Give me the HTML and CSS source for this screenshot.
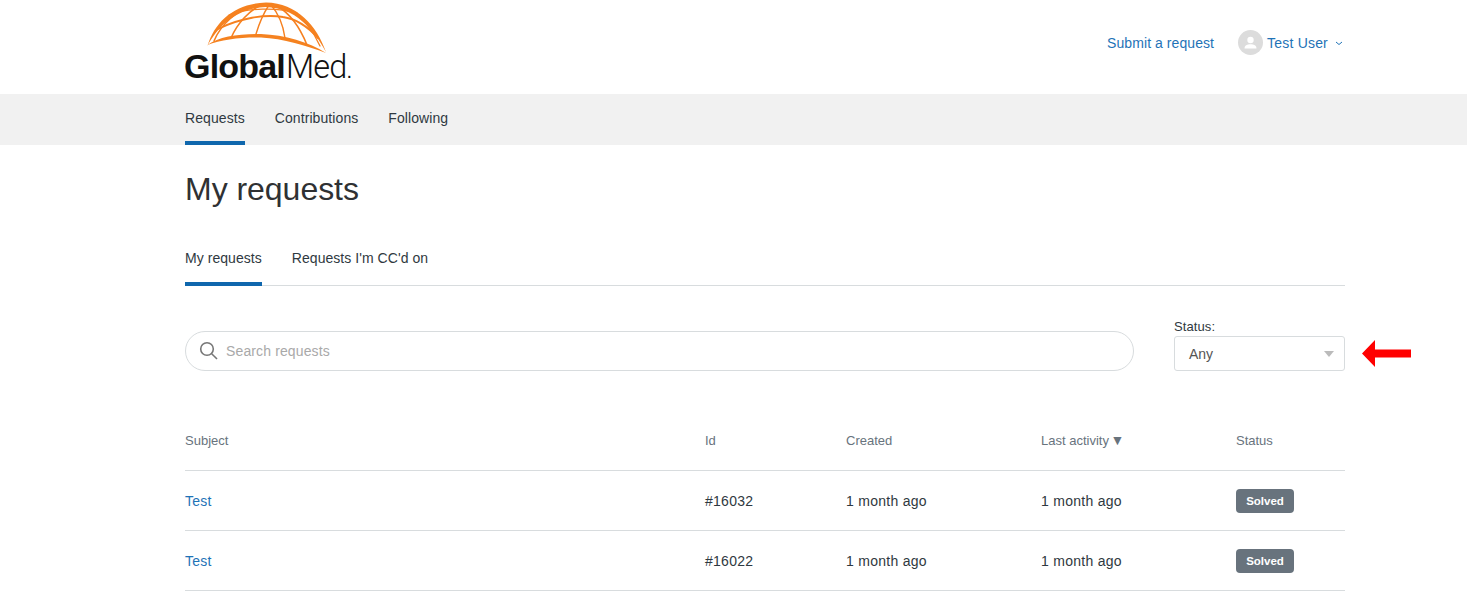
FILE: index.html
```
<!DOCTYPE html>
<html lang="en">
<head>
<meta charset="utf-8">
<title>My requests</title>
<link rel="stylesheet" href="styles.css">
</head>
<body>
<header class="header">
  <div class="wrap header-row">
    <div class="logo">
      <svg class="globe" width="170" height="56" viewBox="0 0 170 56" fill="none" stroke="#f6801f" stroke-linecap="round">
        <path d="M22.500 46 C30 21 50 3.500 81 2.500 C112 3 132 26 141 52 C128 28 110 8 81 7 C54 8 34 24 22.500 46z" fill="#f58220" stroke="none"/>
        <path d="M22.500 45 C34 36.500 54 33.500 76 34 C100 35 124 42 141 53 C122 46 98 38.500 76 37.500 C56 37 36 39.500 22.500 45z" fill="#f58220" stroke="none"/>
        <path d="M33 29 C55 18 80 14 98 17 C112 19 124 28 133 38" stroke-width="1.900"/>
        <path d="M44 15 C62 8 92 7 112 13" stroke-width="1.300"/>
        <path d="M78 4 C64 10 52 24 46 38" stroke-width="1.600"/>
        <path d="M70 5 C52 10 36 24 29 41" stroke-width="1.500"/>
        <path d="M84 5 C78 14 74 24 71 34" stroke-width="1.400"/>
        <path d="M86 5 C94 14 98 24 100 38" stroke-width="1.400"/>
        <path d="M92 6 C106 14 116 30 122 45" stroke-width="1.500"/>
        <path d="M104 9 C118 18 128 30 135 46" stroke-width="1.300"/>
      </svg>
      <div class="wordmark"><span class="bold">Global</span><span class="thin">Med</span><span class="reg">.</span></div>
    </div>
    <nav class="user-nav">
      <a class="link" href="#">Submit a request</a>
      <div class="user">
        <span class="avatar">
          <svg width="25" height="25" viewBox="0 0 25 25"><circle cx="12.5" cy="12.5" r="12.5" fill="#dcdcdc"/><circle cx="12.5" cy="10" r="3.2" fill="#fff"/><path d="M6.5 18.5c0-3 2.6-4.2 6-4.2s6 1.200 6 4.2z" fill="#fff"/></svg>
        </span>
        <a class="link" href="#">Test User</a>
        <svg class="chev" width="8" height="5" viewBox="0 0 8 5" fill="none" stroke="#1f73b7"><path d="M1 1l3 2.500L7 1"/></svg>
      </div>
    </nav>
  </div>
</header>

<div class="subnav">
  <div class="wrap tabs">
    <a class="tab active" href="#">Requests</a>
    <a class="tab" href="#">Contributions</a>
    <a class="tab" href="#">Following</a>
  </div>
</div>

<main class="wrap">
  <h1 class="title">My requests</h1>
  <div class="subtabs">
    <a class="subtab active" href="#">My requests</a>
    <a class="subtab" href="#">Requests I'm CC'd on</a>
  </div>

  <div class="filters">
    <div class="search">
      <svg width="20" height="20" viewBox="0 0 20 20" fill="none" stroke="#777" stroke-width="1.600"><circle cx="8" cy="8" r="6.300"/><path d="M12.700 12.700L18 18"/></svg>
      <span class="placeholder">Search requests</span>
    </div>
    <div class="status-wrap">
      <span class="status-label">Status:</span>
      <div class="select">
        <span>Any</span>
        <span class="caret"></span>
      </div>
      <svg class="arrow" width="50" height="30" viewBox="0 0 50 30"><path d="M0 14.500L13 1V10.500H49V18.500H13V28z" fill="#f00"/></svg>
    </div>
  </div>

  <table class="table">
    <thead>
      <tr>
        <th class="c1">Subject</th>
        <th class="c2">Id</th>
        <th class="c3">Created</th>
        <th class="c4">Last activity <span class="sort">▼</span></th>
        <th>Status</th>
      </tr>
    </thead>
    <tbody>
      <tr>
        <td><a class="link" href="#">Test</a></td>
        <td>#16032</td>
        <td>1 month ago</td>
        <td>1 month ago</td>
        <td><span class="badge">Solved</span></td>
      </tr>
      <tr>
        <td><a class="link" href="#">Test</a></td>
        <td>#16022</td>
        <td>1 month ago</td>
        <td>1 month ago</td>
        <td><span class="badge">Solved</span></td>
      </tr>
    </tbody>
  </table>
</main>
</body>
</html>
```
FILE: styles.css
```
* { box-sizing: border-box; }
html, body { margin: 0; padding: 0; height: 593px; overflow: hidden; }
body { font-family: "Liberation Sans", Arial, sans-serif; font-size: 14px; color: #2f3941; background: #fff; }
a { text-decoration: none; color: inherit; }
.wrap { width: 1160px; margin-left: 185px; }
.header { height: 94px; }
.header-row { display: flex; justify-content: space-between; height: 94px; }
.logo { position: relative; width: 170px; height: 94px; }
.globe { position: absolute; left: 0; top: 0; }
.wordmark { position: absolute; left: -1px; top: 47px; font-size: 34px; line-height: 38px; color: #111; letter-spacing: -0.8px; white-space: nowrap; }
.bold { font-weight: 700; }
.thin { font-family: Roboto, "Liberation Sans", sans-serif; font-weight: 300; margin-left: 1px; font-size: 32.500px; }
.reg { font-size: 20px; }
.user-nav { display: flex; align-items: center; gap: 24px; height: 85px; margin-right: 2px; }
.link { color: #1f73b7; }
.user-nav .link { font-size: 14px; letter-spacing: 0.2px; }
.user-nav > .link { letter-spacing: 0.07px; }
.user { display: flex; align-items: center; gap: 4px; }
.avatar { display: block; height: 25px; width: 25px; }
.avatar svg { display: block; }
.chev { margin-left: 3px; margin-top: 2px; }
.subnav { background: #f1f1f1; height: 51px; }
.tabs { display: flex; gap: 30px; height: 51px; }
.tab { display: block; line-height: 48px; height: 51px; color: #2f3941; letter-spacing: 0.08px; }
.tab.active { border-bottom: 4px solid #0f67ad; }
.title { margin: 0; font-size: 32px; font-weight: 400; line-height: 40px; padding-top: 24px; height: 84px; color: #2f3133; letter-spacing: -0.03px; }
.subtabs { display: flex; gap: 30px; height: 57px; border-bottom: 1px solid #d8dcde; }
.subtab { display: block; height: 57px; line-height: 58px; color: #2f3941; letter-spacing: 0.05px; }
.subtab.active { border-bottom: 4px solid #0f67ad; }
.filters { display: flex; justify-content: space-between; margin-top: 31px; height: 54px; }
.search { width: 949px; height: 40px; margin-top: 14px; border: 1px solid #d8dcde; border-radius: 20px; display: flex; align-items: center; padding-left: 13px; gap: 7px; }
.placeholder { color: #a9a9a9; letter-spacing: 0.13px; }
.status-wrap { position: relative; width: 171px; }
.status-label { display: block; font-size: 13px; letter-spacing: 0.1px; line-height: 16px; margin-top: 2px; height: 17px; color: #2f3941; }
.select { height: 35px; border: 1px solid #d8dcde; border-radius: 3px; display: flex; align-items: center; justify-content: space-between; padding: 0 10px 0 14px; color: #555; }
.caret { width: 0; height: 0; border-left: 5px solid transparent; border-right: 5px solid transparent; border-top: 6px solid #bbb; margin-top: 1px; }
.arrow { position: absolute; left: 188px; top: 22px; }
.table { width: 1160px; margin-top: 39px; border-collapse: collapse; table-layout: fixed; }
th { height: 60px; padding: 2px 0 0; text-align: left; font-weight: 400; font-size: 13px; color: #68737d; border-bottom: 1px solid #d8dcde; vertical-align: middle; }
.c1 { width: 520px; }
.c2 { width: 141px; }
.c3 { width: 195px; }
.c4 { width: 195px; }
.sort { font-size: 14px; line-height: 1; margin-left: -2px; }
td { height: 60px; padding: 2px 0 0; border-bottom: 1px solid #d8dcde; vertical-align: middle; color: #2f3941; letter-spacing: 0.27px; }
.badge { display: inline-block; height: 24px; width: 58px; line-height: 24px; text-align: center; background: #68737d; color: #fff; font-size: 11.500px; letter-spacing: 0; font-weight: 700; border-radius: 4px; }
```
